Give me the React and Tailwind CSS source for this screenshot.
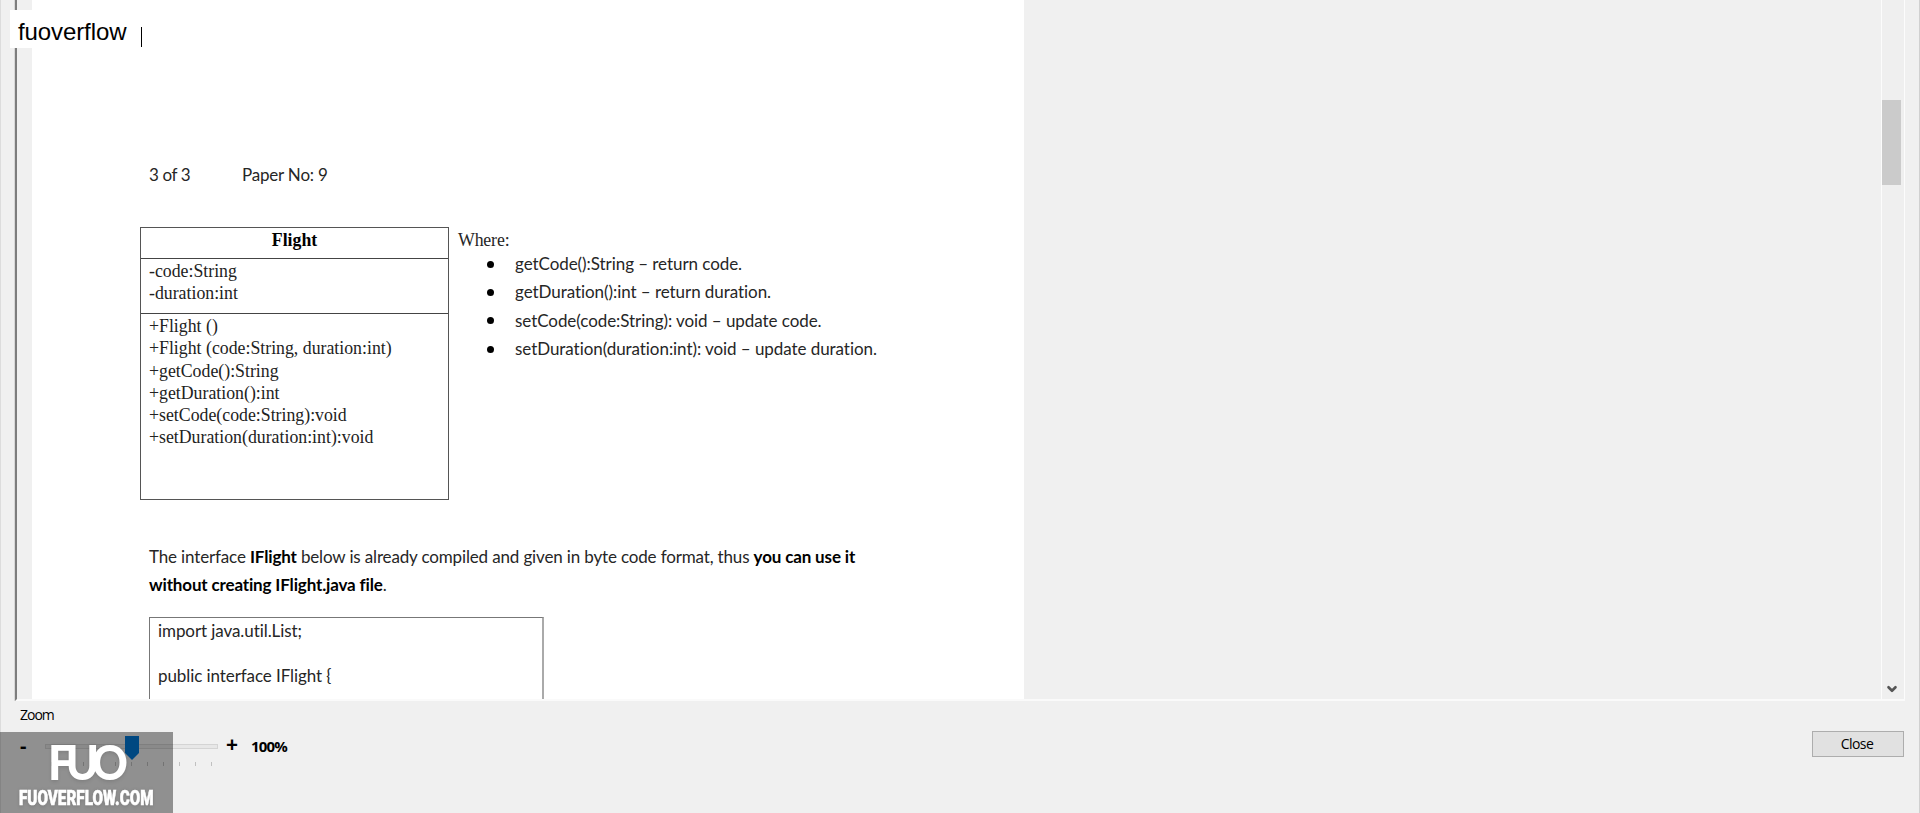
import { ChevronDown } from "lucide-react";

const fields = ["-code:String", "-duration:int"];

const methods = [
  "+Flight ()",
  "+Flight (code:String, duration:int)",
  "+getCode():String",
  "+getDuration():int",
  "+setCode(code:String):void",
  "+setDuration(duration:int):void",
];

const notes = [
  "getCode():String – return code.",
  "getDuration():int – return duration.",
  "setCode(code:String): void – update code.",
  "setDuration(duration:int): void – update duration.",
];

const ticks = Array.from({ length: 11 }, (_, i) => i);

function ClassDiagram() {
  return (
    <div className="w-[309px] h-[273px] shrink-0 border border-[#555] flex flex-col font-['Liberation_Serif',serif] text-[17.8px] leading-[22.3px] tracking-normal text-[#222]">
      <div className="h-[31px] pt-px border-b border-[#444] text-center font-bold text-black">
        Flight
      </div>
      <div className="h-[55px] pt-px pl-2 border-b border-[#444]">
        {fields.map((field) => (
          <div key={field}>{field}</div>
        ))}
      </div>
      <div className="pt-px pl-2">
        {methods.map((method) => (
          <div key={method} className="whitespace-nowrap">{method}</div>
        ))}
      </div>
    </div>
  );
}

function Paper() {
  return (
    <div className="w-[992px] h-full shrink-0 bg-white overflow-hidden pt-[161px] pl-[108px] font-['Lato',sans-serif] text-[17px] leading-7 tracking-[-0.15px] text-[#262626]">
      <div className="flex pl-[9px] whitespace-nowrap">
        <span className="w-[93px] tracking-[-0.4px]">3 of 3</span>
        <span className="tracking-[-0.2px]">Paper No: 9</span>
      </div>

      <div className="flex mt-[38px]">
        <ClassDiagram />
        <div className="pl-[9px] pt-[3px]">
          <div className="font-['Liberation_Serif',serif] text-[17.8px] leading-5">Where:</div>
          <ul className="leading-[28.3px] pl-[29px] tracking-[-0.06px]">
            {notes.map((note) => (
              <li key={note} className="flex items-center whitespace-nowrap">
                <span className="w-[7px] h-[7px] mr-[21px] rounded-full bg-black" />
                {note}
              </li>
            ))}
          </ul>
        </div>
      </div>

      <p className="mt-[43px] pl-[9px] whitespace-nowrap">
        The interface <b className="text-black">IFlight</b> below is already compiled and given in byte code format, thus{" "}
        <b className="text-black">you can use it</b>
        <br />
        <b className="text-black">without creating IFlight.java file</b>.
      </p>

      <div className="w-[395px] h-[120px] mt-[18px] ml-[9px] pl-2 pt-0.5 border border-[#777] border-r-2 border-r-[#aaa] leading-[22.5px] tracking-[-0.08px] whitespace-pre">
        {"import java.util.List;\n\npublic interface IFlight {"}
      </div>
    </div>
  );
}

function Scrollbar() {
  return (
    <div className="w-[24px] h-full shrink-0 border-x border-[#fcfcfc] bg-[#efefef] flex flex-col">
      <div className="w-[19px] h-[85px] mt-[100px] bg-[#cbcbcb]" />
      <ChevronDown className="w-3.5 h-3.5 mt-auto mb-[3px] ml-[3px] text-[#555]" strokeWidth={4.5} />
    </div>
  );
}

function ZoomSlider() {
  return (
    <div className="relative w-[173px] h-[30px] pt-2">
      <div className="h-[5px] border border-[#d4d4d4] bg-[#e7e7e7]" />
      <div className="flex justify-between mt-[13px] pl-[6px] pr-[6px]">
        {ticks.map((tick) => (
          <span key={tick} className="w-px h-1 bg-[#c0c0c0]" />
        ))}
      </div>
      <svg className="absolute left-20 top-0" width="14" height="24" viewBox="0 0 14 24">
        <path d="M0 0h14v17l-7 7-7-7z" fill="#0078d7" />
      </svg>
    </div>
  );
}

function Watermark() {
  return (
    <div className="absolute left-0 top-[732px] w-[173px] h-[81px] pt-3 bg-black/40 text-white whitespace-nowrap overflow-hidden">
      <div className="ml-12 origin-left scale-x-[0.93] font-['Lato',sans-serif] font-black text-[48px] leading-9 tracking-[-8px] drop-shadow-sm">
        FUO
      </div>
      <div className="mt-2 ml-[19px] origin-left scale-x-[0.725] font-['Roboto',sans-serif] font-black text-[21px] leading-5 [-webkit-text-stroke:0.6px_white] drop-shadow-sm">
        FUOVERFLOW.COM
      </div>
    </div>
  );
}

export default function App() {
  return (
    <div className="relative w-[1920px] h-[813px] overflow-hidden bg-[#f0f0f0] shadow-[inset_1px_0_0_#dcdcdc,inset_-1px_0_0_#d0d0d0] flex flex-col font-['Open_Sans',sans-serif] text-black">
      <div className="h-[701px] ml-[15px] mr-[15px] flex border-l-2 border-l-[#7d7d7d] border-b-2 border-b-[#fafafa] shadow-[-1px_0_0_#d8d8d8]">
        <div className="w-[15px] shrink-0" />
        <Paper />
        <div className="flex-1" />
        <Scrollbar />
      </div>

      <div className="flex-1 flex justify-between pl-5 pr-4">
        <div className="pt-1">
          <div className="text-[14px] leading-5 tracking-[-1px]">Zoom</div>
          <div className="flex items-start pt-[11px]">
            <span className="w-[25px] text-[20px] leading-5 font-bold">-</span>
            <ZoomSlider />
            <span className="ml-2 text-[21px] leading-4 font-bold">+</span>
            <span className="ml-[13px] text-[15px] leading-5 font-bold tracking-[-0.8px]">100%</span>
          </div>
        </div>
        <button className="w-[92px] h-[26px] mt-[30px] pr-0.5 border border-[#adadad] bg-[#e1e1e1] text-[14px] leading-6 tracking-[-0.6px]">
          Close
        </button>
      </div>

      {/* Typed label over the corner of the page */}
      <div className="absolute left-2.5 top-2.5 h-[38px] w-[150px] bg-white flex pl-2 font-['Liberation_Sans',sans-serif] text-[24px] leading-[43px] tracking-[-0.1px]">
        fuoverflow
        <span className="w-px h-5 ml-[15px] mt-[17px] bg-black" />
      </div>

      <Watermark />
    </div>
  );
}
